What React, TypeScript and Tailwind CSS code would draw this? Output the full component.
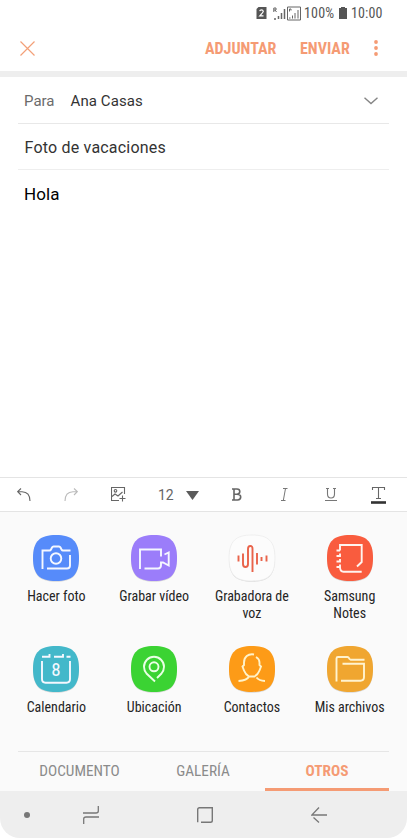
import React from "react"

const condensed = "font-['Roboto_Condensed',Roboto,sans-serif] [font-stretch:75%]"

const squircle = "M23 0C39 0 46 6 46 23S39 46 23 46 0 40 0 23 7 0 23 0Z"

const apps = [
  {
    name: "Hacer foto",
    color: "#568bfa",
    icon: (
      <>
        <path d="M9.500 34V15.500H16.500Q17.500 15.500 18 14.500L19 12.500Q19.500 11.500 20.500 11.500H26Q27 11.500 27.500 12.500L28.500 14.500Q29 15.500 30 15.500H37.500M14 33.500H34Q37 33.500 37 30.500V20" />
        <circle cx="23" cy="23.500" r="5.300" />
      </>
    ),
  },
  {
    name: "Grabar vídeo",
    color: "#9b7dfa",
    icon: <path d="M9 34V14.500H30V21.500M13.500 33.500H27Q30 33.500 30 30V27.500H32L37.700 30.500V17.500L33.500 19.500" />,
  },
  {
    name: "Grabadora de voz",
    color: "#fcfcfc",
    stroke: "#e9634a",
    icon: <path d="M9.500 20.500V26.500M14 18.500V29Q14 32 16.500 32T19 29V14Q19 11 21.300 11T23.500 14V37M28 18V29.500M32.500 22V26M37.500 20.500V26.500" />,
  },
  {
    name: "Samsung Notes",
    color: "#f95c3e",
    stroke: "#fff4ef",
    icon: <path d="M13 15.500V10H34.700V27L30 31.500M9.500 15.500H13M9.500 21H13V18.500M9.500 26.500H13V24M9.500 32H13V29.500M13 32Q13 36.700 16.500 36.700H34.700" />,
  },
  {
    name: "Calendario",
    color: "#43b8ca",
    icon: (
      <>
        <path d="M9 15V33Q9 36.700 12.500 36.700H33.500Q37 36.700 37 33V15M9 10.700H16.500V8M21 10.700H30V8M33.500 10.700H37.500" />
        <text x="23" y="30.300" textAnchor="middle" fontSize="19" fill="#f5f8ff" stroke="none" className={condensed}>8</text>
      </>
    ),
  },
  {
    name: "Ubicación",
    color: "#3bd333",
    stroke: "#e9ffe5",
    icon: (
      <>
        <path d="M24 35.500L15.500 27.500Q13 24.500 13 20.800A10 10 0 0 1 33 20.800Q33 24.500 30.500 27.500L26 32" />
        <circle cx="23" cy="20.800" r="4.500" />
      </>
    ),
  },
  {
    name: "Contactos",
    color: "#fd9b17",
    stroke: "#fff3c9",
    icon: <path d="M25 8.500C19 7.500 15 11 15 16.500V19L13.500 20.500L15 24.500Q16.500 28.500 20 30.500H25.500Q29 28.500 30.500 24.500L32 20.500L30.500 19V16.500Q30.500 13 27 11M20 30.500Q18 34.500 9.500 35M27.500 31.500Q30 34.700 36 35" />,
  },
  {
    name: "Mis archivos",
    color: "#f0a630",
    stroke: "#fff3cf",
    icon: <path d="M9.500 35.500V12.500Q9.500 11 11 11H20.500Q21.500 11 22 12.200T23.500 13.700H37.500M15.500 17.700H37V31Q37 34.700 33.500 34.700H14" />,
  },
]

function StatusBar() {
  return (
    <div className="flex h-[25px] items-center justify-end pr-[24px] pt-px text-[14px] text-[#555555]">
      <svg width="11" height="12" viewBox="0 0 11 12" className="mr-[6px]">
        <path d="M2.500 0H10.500V12H0.500V2Z" fill="#555" />
        <path d="M3.700 4.200Q4 2.900 5.500 2.900T7.300 4.300Q7.300 5.300 3.800 8.800H7.500" fill="none" stroke="#fff" strokeWidth="1.200" />
      </svg>
      <svg width="28" height="15" viewBox="0 0 28 15" className="mr-[3px]" fill="none" stroke="#666">
        <path d="M0.800 6V2H3V4H0.800M2 4L3.500 6" strokeWidth="1" />
        <path d="M1 13H3M5.500 13V10M8.500 13V7M11.500 13V3" strokeWidth="1.500" />
        <path d="M14.500 1H27.500V14H14.500Z" />
        <path d="M16.500 5.500V3H18V4.500M16 12H17.500M19.500 12.500V9.500M22 12.500V7M25 12.500V4" />
      </svg>
      <span className={`${condensed} mr-[5px] w-[30px] whitespace-nowrap tracking-[0.2px]`}>100%</span>
      <svg width="8" height="12" viewBox="0 0 8 12" className="mr-[4px]" fill="#555">
        <path d="M2 0H6V1H8V12H0V1H2Z" />
      </svg>
      <span className={`${condensed} w-[32px] whitespace-nowrap tracking-[0.1px]`}>10:00</span>
    </div>
  )
}

function Header() {
  return (
    <div className={`${condensed} flex h-[46px] items-center pl-5 text-[16px] font-bold text-[#f59b74]`}>
      <svg width="15" height="15" viewBox="0 0 15 15" fill="none" stroke="#f3a078" strokeWidth="1.200">
        <path d="M0.500 0.500L14.500 14.500M14.500 0.500L0.500 14.500" />
      </svg>
      <button className="ml-auto w-[72px] whitespace-nowrap pt-px text-left">ADJUNTAR</button>
      <button className="ml-[23px] w-[50px] whitespace-nowrap pt-px text-left">ENVIAR</button>
      <svg width="4" height="16" viewBox="0 0 4 16" className="ml-[24px] mr-[29px]" fill="#f59b74">
        <circle cx="2" cy="2" r="1.900" />
        <circle cx="2" cy="8" r="1.900" />
        <circle cx="2" cy="14" r="1.900" />
      </svg>
    </div>
  )
}

function Toolbar() {
  return (
    <div className="flex h-[35px] shrink-0 items-center border-y border-[#e4e4e4]">
      <svg width="14" height="14" viewBox="0 0 14 14" className="ml-[17px]" fill="none" stroke="#666" strokeWidth="1.100">
        <path d="M4 0.500L0.700 3.700L4 7M0.700 3.700H5Q13 4 13 13" />
      </svg>
      <svg width="14" height="14" viewBox="0 0 14 14" className="ml-[33px]" fill="none" stroke="#bbb" strokeWidth="1.100">
        <path d="M10 0.500L13.300 3.700L10 7M13.300 3.700H9Q1 4 1 13" />
      </svg>
      <svg width="15" height="15" viewBox="0 0 15 15" className="ml-[33px]" fill="none" stroke="#666" strokeWidth="1.100">
        <path d="M8 13.500H0.500V0.500H13.500V7M11.500 8.500V14.500M8.500 11.500H14.500M1 9.500L4 7L7 9L11.500 5" />
        <circle cx="4.500" cy="3.800" r="1.300" />
      </svg>
      <span className="ml-[32px] w-[16px] pt-px text-[14px] text-[#666]">12</span>
      <svg width="13" height="9" viewBox="0 0 13 9" className="ml-[12px] mt-[2px]" fill="#5b5b5b">
        <path d="M0 0H13L6.500 9Z" />
      </svg>
      <svg width="10" height="13" viewBox="0 0 10 13" className="ml-[33px]" fill="none" stroke="#666" strokeWidth="1.600">
        <path d="M0 1H5Q7.800 1 7.800 3.600T5 6.200H2M5 6.200Q8.700 6.200 8.700 9T5.500 12H0M2 1V12" />
      </svg>
      <svg width="7" height="13" viewBox="0 0 7 13" className="ml-[39px]" fill="none" stroke="#777">
        <path d="M2 0.500H6.500M0 12.500H4.500M4.500 0.500L2.300 12.500" />
      </svg>
      <svg width="12" height="14" viewBox="0 0 12 14" className="ml-[37px]" fill="none" stroke="#777" strokeWidth="1.100">
        <path d="M1 0.500H4M8 0.500H11M2.500 0.500V6Q2.500 10 6 10T9.500 6V0.500M0 12.500H12" />
      </svg>
      <svg width="15" height="17" viewBox="0 0 15 17" className="ml-[34px] mt-px" fill="none" stroke="#666">
        <path d="M1.500 3V0.500H13.500V3M7.500 0.500V11M5 11.500H10" strokeWidth="1.100" />
        <path d="M0 15.500H15" stroke="#333" strokeWidth="2.600" />
      </svg>
    </div>
  )
}

export default function App() {
  return (
    <div className="flex h-[838px] w-[407px] flex-col overflow-hidden rounded-b-[20px] bg-white font-['Roboto',sans-serif]">
      <StatusBar />
      <Header />
      <div className="h-[6px] shrink-0 bg-[#eeeeee]" />
      <div className="mx-[18px] flex h-[47px] items-center border-b border-[#e8e8e8] pl-[6px] pt-[2px] text-[15px]">
        <span className="w-[46.5px] text-[#6b6b6b]">Para</span>
        <span className="tracking-[0.1px] text-[#333]">Ana Casas</span>
        <svg width="14" height="8" viewBox="0 0 14 8" className="ml-auto mr-[11px]" fill="none" stroke="#858585" strokeWidth="1.400">
          <path d="M0.500 0.800L7 6.500L13.500 0.800" />
        </svg>
      </div>
      <div className="mx-[18px] flex h-[46px] items-center border-b border-[#eeeeee] pl-[6.5px] pt-[2px] text-[16px] tracking-[0.2px] text-[#333]">Foto de vacaciones</div>
      <div className="flex-1 pl-6 pt-[12px] text-[17px] leading-[24px] tracking-[0.1px] text-black">Hola</div>
      <Toolbar />
      <div className="flex h-[279px] shrink-0 flex-col bg-[#fafafa]">
        <div className="grid h-[239px] grid-cols-4 grid-rows-[111px_111px] pl-[7.5px] pr-[8.5px] pt-[22.5px]">
          {apps.map(app => (
            <div key={app.name} className="flex flex-col items-center">
              <svg width="46" height="47" viewBox="0 0 46 47" className="shrink-0 overflow-visible" fill="none" stroke={app.stroke || "#f5f8ff"} strokeWidth="1.900">
                <path d={squircle} fill="#d8d8d8" stroke="none" transform="translate(0 0.800)" />
                <path d={squircle} fill={app.color} stroke={app.stroke === "#e9634a" ? "#ececec" : "none"} strokeWidth="0.800" />
                {app.icon}
              </svg>
              <span className={`${condensed} mt-[6.5px] w-[80px] text-center text-[14px] leading-[17px] text-[#252525]`}>{app.name}</span>
            </div>
          ))}
        </div>
        <div className={`${condensed} mx-[18px] flex h-[40px] border-t border-[#e6e6e6] text-center text-[15.3px] leading-[39px] text-[#8b8b8b]`}>
          <div className="w-[123px]">DOCUMENTO</div>
          <div className="w-[124px]">GALERÍA</div>
          <div className="w-[124px] border-b-[3px] border-[#f59b74] font-bold text-[#f59b74]">OTROS</div>
        </div>
      </div>
      <div className="flex h-[47px] shrink-0 items-center bg-[#eeeeee]">
        <div className="ml-6 h-[6px] w-[6px] rounded-full bg-[#777]" />
        <svg width="16" height="18" viewBox="0 0 16 18" className="ml-[53px]" fill="none" stroke="#777" strokeWidth="1.300">
          <path d="M0 7H13Q15.300 7 15.300 5V0M0.700 18V13Q0.700 11 3 11H16" />
        </svg>
        <svg width="16" height="16" viewBox="0 0 16 16" className="ml-[97.5px]" fill="none" stroke="#777" strokeWidth="1.400">
          <path d="M0.700 15.300V2.500Q0.700 0.700 2.500 0.700H15.300V13.500Q15.300 15.300 13.500 15.300H4" />
        </svg>
        <svg width="16" height="16" viewBox="0 0 16 16" className="ml-[98px]" fill="none" stroke="#777" strokeWidth="1.300">
          <path d="M8 0.500L0.800 8H16M2.500 10.500L8 15.500" />
        </svg>
      </div>
    </div>
  )
}
